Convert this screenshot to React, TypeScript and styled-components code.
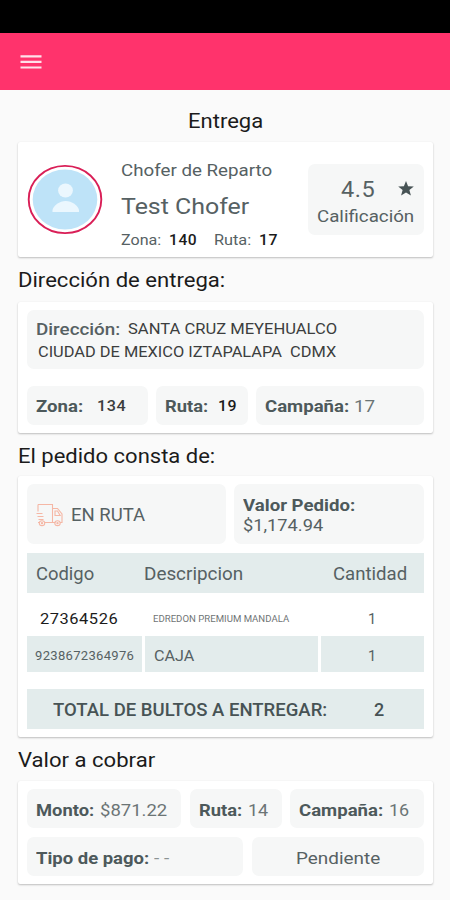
import React, { useLayoutEffect, useRef } from 'react';
import styled, { createGlobalStyle } from 'styled-components';

const GlobalStyle = createGlobalStyle`
  * { box-sizing: border-box; }
  body { margin: 0; background: #fafafa; font-family: Roboto, "Liberation Sans", sans-serif; }
`;

const slate = '#566163';
const slateDark = '#475355';
const ink = '#1b1b1b';

const Screen = styled.main`
  width: 450px;
  height: 900px;
  overflow: hidden;
  display: flex;
  flex-direction: column;
  background: #fafafa;
`;

const StatusBar = styled.div`
  flex: none;
  height: 33px;
  background: #000;
`;

const AppBar = styled.header`
  flex: none;
  height: 57px;
  display: flex;
  align-items: center;
  padding-left: 20px;
  background: #ff336c;
`;

const MenuButton = styled.button`
  display: flex;
  padding: 0;
  border: 0;
  background: none;
`;

const Slot = styled.span<{ $w: number; $gap: number; $h?: number }>`
  display: block;
  flex: none;
  width: ${(p) => p.$w}px;
  height: ${(p) => p.$h ?? 20}px;
  line-height: ${(p) => p.$h ?? 20}px;
  margin-left: ${(p) => p.$gap}px;
  padding-left: 0.8px;
`;

const Glyphs = styled.span<{ $size: number; $weight: number; $color: string; $track: number }>`
  display: inline-block;
  vertical-align: top;
  white-space: pre;
  transform-origin: 0 50%;
  font-size: ${(p) => p.$size}px;
  font-weight: ${(p) => p.$weight};
  color: ${(p) => p.$color};
  letter-spacing: ${(p) => p.$track}px;
`;

type TextProps = {
  children: string;
  w: number;
  gap?: number;
  h?: number;
  size?: number;
  weight?: number;
  color?: string;
  track?: number;
};

/* A run of text stretched horizontally to fill its slot, less a small side bearing. */
function Text({ children, w, gap = 0, h, size = 17, weight = 400, color = slate, track = 0 }: TextProps) {
  const ref = useRef<HTMLSpanElement>(null);
  useLayoutEffect(() => {
    const el = ref.current;
    if (!el) return;
    el.style.transform = 'none';
    el.style.transform = `scaleX(${(w - 1.8) / el.getBoundingClientRect().width})`;
  }, [w, children]);
  return (
    <Slot $w={w} $gap={gap} $h={h}>
      <Glyphs ref={ref} $size={size} $weight={weight} $color={color} $track={track}>{children}</Glyphs>
    </Slot>
  );
}

const PageTitle = styled.h1`
  flex: none;
  height: 52px;
  margin: 0;
  padding-top: 21px;
  display: flex;
  justify-content: center;
  align-items: flex-start;
`;

const SectionTitle = styled.h2<{ $h: number; $top: number }>`
  flex: none;
  height: ${(p) => p.$h}px;
  margin: 0;
  padding: ${(p) => p.$top}px 0 0 17.5px;
`;

const Card = styled.section<{ $h: number; $top?: number }>`
  flex: none;
  width: 415px;
  height: ${(p) => p.$h}px;
  margin-left: 18px;
  padding: ${(p) => p.$top ?? 8}px 9px 0;
  border-radius: 2px;
  background: #fff;
  box-shadow: 0 1px 2px rgba(0, 0, 0, 0.24), 0 0 1px rgba(0, 0, 0, 0.06);
`;

const DriverCard = styled(Card)`
  display: flex;
  align-items: flex-start;
`;

const Avatar = styled.div`
  width: 76px;
  height: 71px;
  margin-top: 22px;
  display: flex;
`;

const DriverInfo = styled.div`
  width: 188px;
  padding: 18px 0 0 17px;
`;

const Line = styled.div<{ $h?: number; $mt?: number }>`
  display: flex;
  align-items: center;
  height: ${(p) => p.$h ?? 20}px;
  margin-top: ${(p) => p.$mt ?? 0}px;
`;

const Rating = styled.div`
  width: 116px;
  height: 71px;
  margin: 22px 0 0 17px;
  padding-top: 15px;
  border-radius: 7px;
  background: #f6f7f7;
`;

const ChipRow = styled.div<{ $mt?: number; $gap?: number }>`
  display: flex;
  gap: ${(p) => p.$gap ?? 8}px;
  margin-top: ${(p) => p.$mt ?? 0}px;
`;

const Chip = styled.div<{ $w: number; $h?: number }>`
  flex: none;
  display: flex;
  align-items: center;
  width: ${(p) => p.$w}px;
  height: ${(p) => p.$h ?? 39}px;
  padding-top: 2px;
  border-radius: 7px;
  background: #f6f7f7;
`;

const StackedChip = styled(Chip)<{ $top: number }>`
  flex-direction: column;
  align-items: flex-start;
  justify-content: flex-start;
  padding-top: ${(p) => p.$top}px;
`;

const Band = styled.div<{ $h: number; $mt?: number; $plain?: boolean }>`
  display: flex;
  align-items: center;
  height: ${(p) => p.$h}px;
  margin-top: ${(p) => p.$mt ?? 0}px;
  padding-top: ${(p) => (p.$plain ? 9 : 1)}px;
  background: ${(p) => (p.$plain ? 'transparent' : '#e3ecec')};
`;

const CellRow = styled.div`
  display: grid;
  grid-template-columns: 115px 173px 103px;
  gap: 3px;
  height: 36px;
`;

const Cell = styled.div`
  display: flex;
  align-items: center;
  padding-top: 3px;
  background: #e3ecec;
`;

const StarIcon = styled.svg`
  display: block;
  margin: -3px 0 0 22px;
`;

const TruckIcon = styled.svg`
  display: block;
  margin-left: 9px;
`;

const bold = { weight: 700, color: '#4d595b' };

export default function App() {
  return (
    <Screen>
      <GlobalStyle />
      <StatusBar />
      <AppBar>
        <MenuButton aria-label="Menu">
          <svg width="22" height="16" viewBox="0 0 22 16">
            <path d="M.5 2.4h21M.5 7.9h21M.5 13.5h21" stroke="#ffe1ea" strokeWidth="2.2" />
          </svg>
        </MenuButton>
      </AppBar>
      <PageTitle><Text w={77} gap={2} size={20} color={ink}>Entrega</Text></PageTitle>

      <DriverCard $h={115} $top={0}>
        <Avatar>
          <svg width="76" height="71" viewBox="0 0 76 71">
            <ellipse cx="38" cy="35.5" rx="36.3" ry="33.6" fill="#fff" stroke="#d91f57" strokeWidth="1.9" />
            <ellipse cx="38" cy="35.5" rx="32.3" ry="30" fill="#bee3f8" />
            <ellipse cx="38.5" cy="26.5" rx="7.4" ry="7" fill="#ebf7fe" />
            <path d="M25.5 48v-2c1-4.5 7-9 13.2-9s12.3 4.5 13.3 9v2z" fill="#ebf7fe" />
          </svg>
        </Avatar>
        <DriverInfo>
          <Line><Text w={153} size={17}>Chofer de Reparto</Text></Line>
          <Line $h={26} $mt={13}><Text w={130} h={26} size={22.5}>Test Chofer</Text></Line>
          <Line $mt={11}>
            <Text w={42} size={14}>Zona:</Text>
            <Text w={30} gap={6} size={14} weight={500} color={ink} track={0.5}>140</Text>
            <Text w={39} gap={15} size={14}>Ruta:</Text>
            <Text w={21} gap={6} size={14} weight={500} color={ink} track={0.5}>17</Text>
          </Line>
        </DriverInfo>
        <Rating>
          <Line $h={22}>
            <Text w={36} gap={32} h={22} size={22} track={0.5}>4.5</Text>
            <StarIcon width="16" height="15" viewBox="0 0 16 15">
              <path d="M8 0l2.1 5.2 5.7.4-4.4 3.5 1.5 5.4L8 11.5l-4.9 3 1.5-5.4L.2 5.6l5.7-.4z" fill={slateDark} />
            </StarIcon>
          </Line>
          <Line $mt={5}><Text w={99} gap={8.5}>Calificación</Text></Line>
        </Rating>
      </DriverCard>

      <SectionTitle $h={44.5} $top={13}><Text w={209} size={20} color={ink}>Dirección de entrega:</Text></SectionTitle>
      <Card $h={131.5}>
        <StackedChip $w={397} $h={59} $top={9}>
          <Line>
            <Text w={86} gap={8} weight={500}>Dirección:</Text>
            <Text w={211} gap={6.5} size={15.5} color="#3c3e3e">SANTA CRUZ MEYEHUALCO</Text>
          </Line>
          <Line $mt={3}><Text w={300} gap={10} size={15.5} color="#3c3e3e">CIUDAD DE MEXICO IZTAPALAPA  CDMX</Text></Line>
        </StackedChip>
        <ChipRow $mt={17}>
          <Chip $w={121}>
            <Text w={49} gap={8} {...bold}>Zona:</Text>
            <Text w={31} gap={12} size={15} weight={500} color="#3b3d3d" track={0.5}>134</Text>
          </Chip>
          <Chip $w={92}>
            <Text w={45} gap={8} {...bold}>Ruta:</Text>
            <Text w={21} gap={8} size={15} weight={500} color={ink} track={0.5}>19</Text>
          </Chip>
          <Chip $w={168}>
            <Text w={86} gap={8} {...bold}>Campaña:</Text>
            <Text w={23} gap={3} color="#6b7475">17</Text>
          </Chip>
        </ChipRow>
      </Card>

      <SectionTitle $h={43} $top={13}><Text w={199} size={20} color={ink}>El pedido consta de:</Text></SectionTitle>
      <Card $h={261}>
        <ChipRow>
          <Chip $w={199} $h={60}>
            <TruckIcon width="27" height="24" viewBox="0 0 27 24" fill="none" stroke="#f5b7a5" strokeWidth="1.1">
              <path d="M2 1.5h14.5v18H9M2 1.5v7M.5 10.5h6M1.5 13.5h6M2.5 16.5h5M16.5 5.5h5l4.5 5.5v8.5h-2M16.5 19.5h3M19 8h2.5l2.7 4.5H19zM2 19.5h1" />
              <ellipse cx="6" cy="20.2" rx="2.7" ry="2.4" />
              <ellipse cx="21.5" cy="20.2" rx="2.7" ry="2.4" />
              <circle cx="6" cy="20.2" r=".6" />
              <circle cx="21.5" cy="20.2" r=".6" />
            </TruckIcon>
            <Text w={76} gap={7} size={17.5}>EN RUTA</Text>
          </Chip>
          <StackedChip $w={190} $h={60} $top={11}>
            <Line><Text w={114} gap={8} {...bold}>Valor Pedido:</Text></Line>
            <Line><Text w={82} gap={8}>$1,174.94</Text></Line>
          </StackedChip>
        </ChipRow>
        <Band $h={40} $mt={9}>
          <Text w={60} gap={8} size={17.5}>Codigo</Text>
          <Text w={101} gap={48.5} size={17.5}>Descripcion</Text>
          <Text w={76} gap={88} size={17.5}>Cantidad</Text>
        </Band>
        <Band $h={43} $plain>
          <Text w={80} gap={12} size={15.5} color={ink} track={0.5}>27364526</Text>
          <Text w={138} gap={33} size={8.5} color="#6f7475">EDREDON PREMIUM MANDALA</Text>
          <Text w={10} gap={77} size={15}>1</Text>
        </Band>
        <CellRow>
          <Cell><Text w={101} gap={7.5} size={13} track={0.3}>9238672364976</Text></Cell>
          <Cell><Text w={42} gap={8} size={15.5}>CAJA</Text></Cell>
          <Cell><Text w={10} gap={46} size={15}>1</Text></Cell>
        </CellRow>
        <Band $h={40} $mt={17}>
          <Text w={276} gap={25.5} size={17.5} weight={500} color={slateDark}>TOTAL DE BULTOS A ENTREGAR:</Text>
          <Text w={12} gap={45} size={17.5} weight={500} color={slateDark}>2</Text>
        </Band>
      </Card>

      <SectionTitle $h={44} $top={13}><Text w={139} size={20} color={ink}>Valor a cobrar</Text></SectionTitle>
      <Card $h={103}>
        <ChipRow $gap={8.5}>
          <Chip $w={154}>
            <Text w={60} gap={8} {...bold}>Monto:</Text>
            <Text w={69} gap={4} color="#6b7475">$871.22</Text>
          </Chip>
          <Chip $w={92}>
            <Text w={45} gap={8.5} {...bold}>Ruta:</Text>
            <Text w={22} gap={4} color="#6b7475">14</Text>
          </Chip>
          <Chip $w={134}>
            <Text w={86} gap={8} {...bold}>Campaña:</Text>
            <Text w={22} gap={4} color="#6b7475">16</Text>
          </Chip>
        </ChipRow>
        <ChipRow $gap={9} $mt={9}>
          <Chip $w={216}>
            <Text w={115} gap={8} {...bold}>Tipo de pago:</Text>
            <Text w={17} gap={3} color="#8b9393">- -</Text>
          </Chip>
          <Chip $w={172}><Text w={86} gap={43.5}>Pendiente</Text></Chip>
        </ChipRow>
      </Card>
    </Screen>
  );
}
